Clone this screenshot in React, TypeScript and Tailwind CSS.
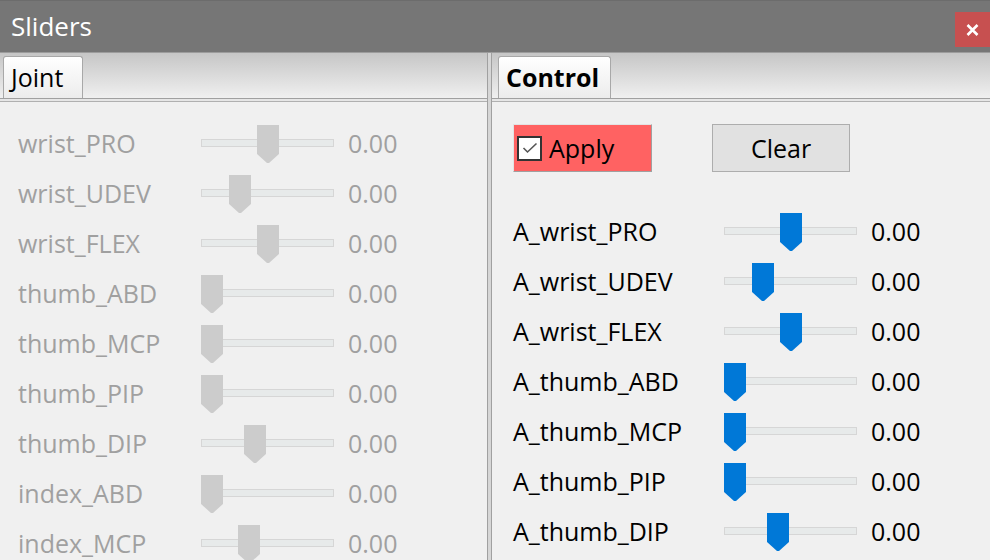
import React from "react";

const joints = [
  { name: "wrist_PRO", pos: 56 },
  { name: "wrist_UDEV", pos: 28 },
  { name: "wrist_FLEX", pos: 56 },
  { name: "thumb_ABD", pos: 0 },
  { name: "thumb_MCP", pos: 0 },
  { name: "thumb_PIP", pos: 0 },
  { name: "thumb_DIP", pos: 43 },
  { name: "index_ABD", pos: 0 },
  { name: "index_MCP", pos: 37 },
];

const controls = [
  { name: "A_wrist_PRO", pos: 56 },
  { name: "A_wrist_UDEV", pos: 28 },
  { name: "A_wrist_FLEX", pos: 56 },
  { name: "A_thumb_ABD", pos: 0 },
  { name: "A_thumb_MCP", pos: 0 },
  { name: "A_thumb_PIP", pos: 0 },
  { name: "A_thumb_DIP", pos: 43 },
];

const font = { fontFamily: '"Open Sans", "Noto Sans", sans-serif' };

const Slider = ({ pos, enabled }: { pos: number; enabled: boolean }) => {
  return (
    <div className="relative h-2 w-[133px] border border-[#d6d6d6] bg-[#e7eaea]">
      <svg
        width="22"
        height="38"
        viewBox="0 0 22 38"
        className="absolute top-[-15px]"
        style={{ left: pos - 1 }}
      >
        <polygon
          points="0,0 22,0 22,29 12,38 10,38 0,29"
          fill={enabled ? "#0078d7" : "#cccccc"}
        />
      </svg>
    </div>
  );
};

const Row = (props: any) => {
  const { name, pos, enabled, labelW } = props;
  const color = enabled ? "text-black" : "text-[#a0a0a0]";
  return (
    <div className="flex h-[50px] items-center">
      <div className={"text-[25px] leading-none " + color} style={{ width: labelW }}>
        {name}
      </div>
      <Slider pos={pos} enabled={enabled} />
      <div className={"ml-[14px] text-[25px] leading-none " + color}>0.00</div>
    </div>
  );
};

const TabBar = ({ label, bold, tabCls }: { label: string; bold?: boolean; tabCls: string }) => {
  return (
    <div className="flex h-[49px] flex-col">
      <div className="flex h-[46px] items-end border-b border-[#a0a0a0] bg-gradient-to-b from-[#c6c6c6] to-[#f0f0f0]">
        <div
          className={
            tabCls +
            " flex h-[42px] items-center rounded-t-[3px] border border-b-0 border-[#a8a8a8] bg-gradient-to-b from-white to-[#ececec] pl-[7px] text-[25px] text-black " +
            (bold ? "font-bold" : "")
          }
        >
          {label}
        </div>
      </div>
      <div className="h-[2px] bg-[#e6e6e6]" />
      <div className="h-px bg-[#b0b0b0]" />
    </div>
  );
};

export default function App() {
  return (
    <div className="flex h-[560px] w-[990px] flex-col overflow-hidden bg-[#f0f0f0]" style={font}>
      {/* title bar */}
      <div className="flex h-[53px] shrink-0 items-start justify-between border-t border-[#6c6c6c] border-b border-b-[#9c9c9c] bg-[#767676]">
        <div className="ml-[11px] mt-[12px] text-[26px] leading-none text-white">Sliders</div>
        <div className="mt-[11px] flex h-[35px] w-[35px] items-center justify-center bg-[#c75050]">
          <svg width="13" height="12" viewBox="0 0 13 12">
            <path d="M1.5 1 L11.5 11 M11.5 1 L1.5 11" stroke="white" strokeWidth="2.6" />
          </svg>
        </div>
      </div>

      <div className="flex flex-1">
        {/* left panel */}
        <div className="flex w-[487px] flex-col">
          <TabBar label="Joint" tabCls="ml-[3px] w-[80px]" />
          <div className="pl-[18px] pt-[16px]">
            {joints.map((j) => (
              <Row key={j.name} name={j.name} pos={j.pos} enabled={false} labelW={183} />
            ))}
          </div>
        </div>

        {/* splitter */}
        <div className="w-[5px] border-x border-[#a0a0a0] bg-[#d6d6d6]" />

        {/* right panel */}
        <div className="flex flex-1 flex-col">
          <TabBar label="Control" bold tabCls="ml-[6px] w-[113px]" />
          <div className="pl-[21px] pt-[22px]">
            <div className="flex gap-[60px]">
              <div className="flex h-[48px] w-[139px] items-center border border-t-[#e3e3e3] border-l-[#e3e3e3] border-b-[#a0a0a0] border-r-[#a0a0a0] bg-[#ff6262] pl-[3px]">
                <div className="flex h-[25px] w-[25px] items-center justify-center border-2 border-[#333333] bg-white">
                  <svg width="16" height="12" viewBox="0 0 16 12">
                    <path d="M1.5 6 L5.5 10 L14.5 1.5" stroke="#555555" strokeWidth="1.6" fill="none" />
                  </svg>
                </div>
                <span className="ml-[7px] text-[25px] leading-none text-black">Apply</span>
              </div>
              <div className="flex h-[48px] w-[138px] items-center justify-center border border-[#adadad] bg-[#e1e1e1] text-[25px] leading-none text-black">
                Clear
              </div>
            </div>
            <div className="pt-[34px]">
              {controls.map((c) => (
                <Row key={c.name} name={c.name} pos={c.pos} enabled labelW={211} />
              ))}
            </div>
          </div>
        </div>
      </div>
    </div>
  );
}
